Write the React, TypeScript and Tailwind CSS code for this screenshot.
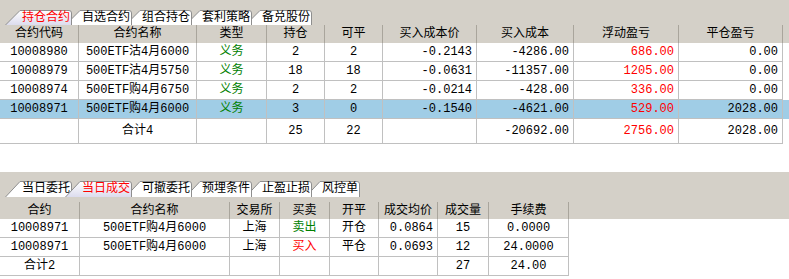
import React from 'react';

type Align = 'c' | 'r';
type Col = { w: string; label: string; align: Align };

const topCols: Col[] = [
  { w: 'w-[79px]', label: '合约代码', align: 'c' },
  { w: 'w-[118px]', label: '合约名称', align: 'c' },
  { w: 'w-[70px]', label: '类型', align: 'c' },
  { w: 'w-[58px]', label: '持仓', align: 'c' },
  { w: 'w-[58px]', label: '可平', align: 'c' },
  { w: 'w-[94px]', label: '买入成本价', align: 'r' },
  { w: 'w-[97px]', label: '买入成本', align: 'r' },
  { w: 'w-[105px]', label: '浮动盈亏', align: 'r' },
  { w: 'w-[104px]', label: '平仓盈亏', align: 'r' },
];

const topRows = [
  ['10008980', '500ETF沽4月6000', '义务', '2', '2', '-0.2143', '-4286.00', '686.00', '0.00'],
  ['10008979', '500ETF沽4月5750', '义务', '18', '18', '-0.0631', '-11357.00', '1205.00', '0.00'],
  ['10008974', '500ETF购4月6750', '义务', '2', '2', '-0.0214', '-428.00', '336.00', '0.00'],
  ['10008971', '500ETF购4月6000', '义务', '3', '0', '-0.1540', '-4621.00', '529.00', '2028.00'],
];
const topTotal = ['', '合计4', '', '25', '22', '', '-20692.00', '2756.00', '2028.00'];

const bottomCols: Col[] = [
  { w: 'w-[80px]', label: '合约', align: 'c' },
  { w: 'w-[150px]', label: '合约名称', align: 'c' },
  { w: 'w-[50px]', label: '交易所', align: 'c' },
  { w: 'w-[50px]', label: '买卖', align: 'c' },
  { w: 'w-[49px]', label: '开平', align: 'c' },
  { w: 'w-[59px]', label: '成交均价', align: 'r' },
  { w: 'w-[51px]', label: '成交量', align: 'c' },
  { w: 'w-[80px]', label: '手续费', align: 'c' },
];

const bottomRows = [
  ['10008971', '500ETF购4月6000', '上海', '卖出', '开仓', '0.0864', '15', '0.0000'],
  ['10008971', '500ETF购4月6000', '上海', '买入', '平仓', '0.0693', '12', '24.0000'],
];
const bottomTotal = ['合计2', '', '', '', '', '', '27', '24.00'];

const topTabs = [
  { label: '持仓合约', w: 68, cls: 'w-[68px] z-[10]', active: true },
  { label: '自选合约', w: 68, cls: 'w-[68px] z-[5]', active: false },
  { label: '组合持仓', w: 68, cls: 'w-[68px] z-[4]', active: false },
  { label: '套利策略', w: 68, cls: 'w-[68px] z-[3]', active: false },
  { label: '备兑股份', w: 68, cls: 'w-[68px] z-[2]', active: false },
];

const bottomTabs = [
  { label: '当日委托', w: 68, cls: 'w-[68px] z-[6]', active: false },
  { label: '当日成交', w: 68, cls: 'w-[68px] z-[10]', active: true },
  { label: '可撤委托', w: 68, cls: 'w-[68px] z-[4]', active: false },
  { label: '预埋条件', w: 68, cls: 'w-[68px] z-[3]', active: false },
  { label: '止盈止损', w: 68, cls: 'w-[68px] z-[2]', active: false },
  { label: '风控单', w: 56, cls: 'w-[56px] z-[1]', active: false },
];

const Tab: React.FC<{ label: string; w: number; h: number; cls: string; active: boolean; id: string }> = ({
  label, w, h, cls, active, id,
}) => (
  <div className={`relative ${cls} h-full -ml-[8px] first:ml-[5px] shrink-0`}>
    <svg className="absolute inset-0" width={w} height={h} viewBox={`0 0 ${w} ${h}`}>
      <defs>
        <linearGradient id={id} x1="0" y1="0" x2="0" y2="1">
          <stop offset="0" stopColor="#ffffff" />
          <stop offset="1" stopColor={active ? '#dcdcee' : '#ffffff'} />
        </linearGradient>
      </defs>
      <path
        d={`M0.5 ${h} L15 1.5 L${w - 4} 1.5 Q${w - 1.5} 1.5 ${w - 1.5} 4 L${w - 1.5} ${h}`}
        fill={`url(#${id})`}
        stroke="#8e8e8e"
        strokeWidth="1"
      />
    </svg>
    <div className={`relative h-full flex items-center pl-[17px] pt-[1px] ${active ? 'text-[#ff0000]' : 'text-black'}`}>
      {label}
    </div>
  </div>
);

const HeaderRow: React.FC<{ cols: Col[]; h: string }> = ({ cols, h }) => (
  <div className={`flex ${h}`}>
    {cols.map((c) => (
      <div key={c.label} className={`${c.w} shrink-0 flex items-center justify-center border-r border-[#a9a59c]`}>
        {c.label}
      </div>
    ))}
  </div>
);

const DataRow: React.FC<{
  cols: Col[];
  cells: string[];
  h: string;
  bg?: string;
  color: (i: number, v: string) => string;
  totalCenter?: boolean;
}> = ({ cols, cells, h, bg = 'bg-white', color }) => (
  <div className={`flex ${h} ${bg}`}>
    {cols.map((c, i) => (
      <div
        key={i}
        className={`${c.w} shrink-0 flex items-center border-r border-b border-[#c0c0c0] ${
          c.align === 'r' ? 'justify-end pr-[4px]' : 'justify-center'
        } ${color(i, cells[i])}`}
      >
        {cells[i]}
      </div>
    ))}
  </div>
);

export default function App() {
  const topColor = (i: number) => (i === 2 ? 'text-[#008000]' : i === 7 ? 'text-[#ff0000]' : 'text-black');
  const bottomColor = (i: number, v: string) =>
    i === 3 ? (v === '卖出' ? 'text-[#008000]' : 'text-[#ff0000]') : 'text-black';

  return (
    <div className="w-[789px] h-[279px] overflow-hidden bg-white text-[12px] leading-none text-black font-['Liberation_Mono','Noto_Sans_CJK_SC',monospace]">
      <div className="bg-[#d4d0c8] pt-[9px]">
        <div className="flex h-[16px]">
          {topTabs.map((t) => (
            <Tab key={t.label} {...t} h={16} id={`tt${t.label}`} />
          ))}
        </div>
        <HeaderRow cols={topCols} h="h-[18px]" />
      </div>
      {topRows.map((r, i) => (
        <DataRow key={i} cols={topCols} cells={r} h="h-[19px]" bg={i === 3 ? 'bg-[#a0cde6]' : 'bg-white'} color={topColor} />
      ))}
      <DataRow cols={topCols} cells={topTotal} h="h-[25px]" color={topColor} />
      <div className="h-[28px]" />
      <div className="bg-[#d4d0c8] pt-[8px]">
        <div className="flex h-[17px]">
          {bottomTabs.map((t) => (
            <Tab key={t.label} {...t} h={17} id={`bt${t.label}`} />
          ))}
        </div>
        <div className="h-[5px]" />
        <HeaderRow cols={bottomCols} h="h-[17px]" />
      </div>
      {bottomRows.map((r, i) => (
        <DataRow key={i} cols={bottomCols} cells={r} h="h-[19px]" color={bottomColor} />
      ))}
      <DataRow cols={bottomCols} cells={bottomTotal} h="h-[19px]" color={bottomColor} />
    </div>
  );
}
